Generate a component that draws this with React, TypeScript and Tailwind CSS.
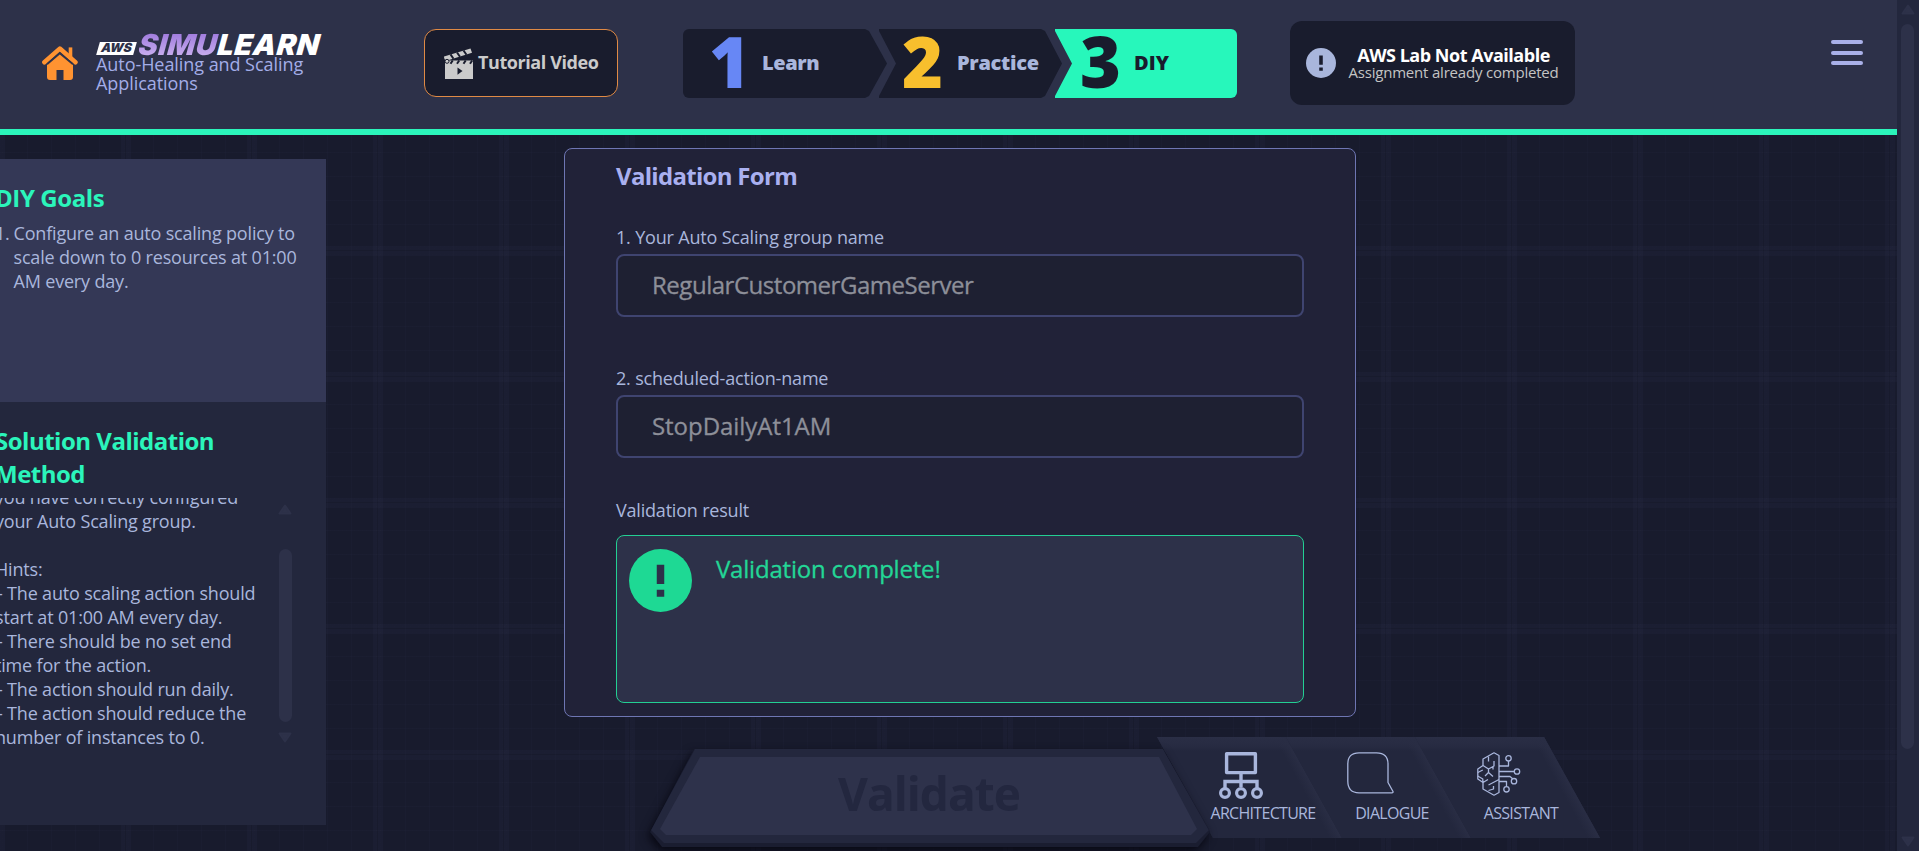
import type { ReactNode } from 'react';

const hints = [
  'you have correctly configured',
  'your Auto Scaling group.',
  '',
  'Hints:',
  '- The auto scaling action should',
  'start at 01:00 AM every day.',
  '- There should be no set end',
  'time for the action.',
  '- The action should run daily.',
  '- The action should reduce the',
  'number of instances to 0.',
];

function HomeIcon() {
  return (
    <svg width="36" height="34" viewBox="0 0 36 34" fill="none" className="shrink-0">
      <path d="M28.5 12V3.2" stroke="#ff9331" strokeWidth="3.6" strokeLinecap="square" />
      <path d="M2.4 16.2 17.8 2.6 33.4 16.2" stroke="#ff9331" strokeWidth="4.6" strokeLinecap="round" strokeLinejoin="round" />
      <path d="M5 18.2 17.8 7.6 31 18.2V31q0 3-3 3h-6.500V24h-7v10H8q-3 0-3-3Z" fill="#ff9331" />
      <path d="M5 18.2 17.8 7.4 31 18.2" stroke="#2d3149" strokeWidth="1.800" />
    </svg>
  );
}

function ClapperIcon() {
  return (
    <svg width="30" height="31" viewBox="0 0 30 31" className="shrink-0">
      <path d="M0 8.500 26.500.5 28 4.800 2.500 12.800Q0 12 0 8.500Z" fill="#cbcbcb" />
      <path d="m6.500 6.400 3 4.300M13 4.500l3 4.300M19.500 2.500l3 4.300" stroke="#191c2d" strokeWidth="2" />
      <path d="M1 12.500H29V31H1Z" fill="#cbcbcb" />
      <path d="m6.500 15.800 2.200-3.300M13 15.800l2.200-3.300M19.500 15.800l2.200-3.300M26 15.800l2.200-3.300" stroke="#191c2d" strokeWidth="2" />
      <circle cx="3" cy="13.300" r="2" fill="#cbcbcb" stroke="#191c2d" strokeWidth="1" />
      <path d="m13.500 19.500 5 3.600-5 3.600Z" fill="#191c2d" />
    </svg>
  );
}

function ArchitectureIcon() {
  return (
    <svg width="44" height="47" viewBox="0 0 44 47" fill="none" stroke="#a9b6dc">
      <path d="M7.600 1.700H36.400V20.600H7.600Z" strokeWidth="3.400" strokeLinejoin="round" />
      <path d="M22 21v14M6 36v-6.500H38V36" strokeWidth="3.400" />
      <circle cx="6" cy="41" r="4.400" strokeWidth="3.200" />
      <circle cx="22" cy="41" r="4.400" strokeWidth="3.200" />
      <circle cx="38" cy="41" r="4.400" strokeWidth="3.200" />
    </svg>
  );
}

function DialogueIcon() {
  return (
    <svg width="47" height="42" viewBox="0 0 47 42" fill="none" stroke="#a9b6dc" strokeWidth="1.300" strokeLinejoin="round">
      <path d="M12 .8H29.500Q41 .8 41 12V30.500L46 39.500Q46.300 40.800 45 40.800H12Q.8 40.800.8 29V12Q.8.800 12 .8Z" />
    </svg>
  );
}

function AssistantIcon() {
  return (
    <svg width="44" height="44" viewBox="0 0 44 44" fill="none" stroke="#a9b6dc" strokeWidth="1.300" strokeLinejoin="round">
      <path d="M22 3.500 17 .8 6 7V13.500L.8 17V27L6 30.500V37L17 43.200 22 40.500Z" />
      <path d="M11.500 4.500V9.500M17 9v5l-5.500 3-5.500-3.500M11.500 17v3.500L8 24M11.500 20.500l4.500 4M16 17.500v-3M.8 20.500l5-2.500M.8 24l5 3v3.500M22 27.500 11.500 33M6 30.500l5-3M11.500 38.500l5-1.500v-3" />
      <path d="M22 14H31.500V9M22 19.500H37M22 24.500H33L36 27M22 29.500H29.500V34.500" />
      <circle cx="31.500" cy="6.300" r="2.700" />
      <circle cx="40" cy="19.500" r="2.700" />
      <circle cx="37" cy="29.200" r="2.700" />
      <circle cx="29.500" cy="37.300" r="2.700" />
    </svg>
  );
}

function AlertBadge({ size, color, mark }: { size: number; color: string; mark: string }) {
  return (
    <svg width={size} height={size} viewBox="0 0 64 64" className="shrink-0">
      <circle cx="32" cy="32" r="32" fill={color} />
      <path d="M28.200 16H35.800V35.500H28.200ZM28.200 41.500H35.800V48.500H28.200Z" fill={mark} />
    </svg>
  );
}

function Arrow({ down, className }: { down?: boolean; className?: string }) {
  return (
    <svg width="14" height="11" viewBox="0 0 14 11" className={className}>
      <path
        d={down ? 'M1.500 1.500H12.500L7 9.500Z' : 'M1.500 9.500H12.500L7 1.500Z'}
        fill="#2d3149" stroke="#2d3149" strokeWidth="2" strokeLinejoin="round"
      />
    </svg>
  );
}

function Tab({ icon, label, first }: { icon: ReactNode; label: string; first?: boolean }) {
  return (
    <button
      className={
        'flex h-[101px] w-[185px] shrink-0 flex-col bg-[#23273d] bg-[linear-gradient(61deg,transparent_151px,#292d44_162px),linear-gradient(#2a2e45_0px,#272b42_9px,#23273d_14px)] pt-[15px] [clip-path:polygon(0_0,129px_0,100%_100%,56px_100%)] ' +
        (first ? '' : '-ml-14')
      }
    >
      <span className="flex h-[48px] w-full items-start justify-center pr-[17px]">{icon}</span>
      <span className="mt-[2px] w-full pl-[27px] text-center text-[16px] leading-[22px] tracking-[-0.7px] text-[#a9b6dc]">{label}</span>
    </button>
  );
}

function Field({ label, value, tracking }: { label: string; value: string; tracking: string }) {
  return (
    <div className="flex flex-col">
      <label className="text-lg leading-6 tracking-[-0.18px] text-[#a9b6dc]">{label}</label>
      <div className={'mt-[5px] flex h-[63px] items-center rounded-lg border-2 border-[#3f4470] bg-[#1e2032] pb-px pl-[34px] text-2xl text-[#8d8f99] [-webkit-text-stroke:0.3px] ' + tracking}>
        {value}
      </div>
    </div>
  );
}

export default function App() {
  return (
    <div className="flex h-[851px] w-[1919px] overflow-hidden bg-[#181b2d] font-['Open_Sans',sans-serif]">
      <div className="flex w-[1897px] shrink-0 flex-col">
        <header className="flex h-[135px] shrink-0 items-start border-b-[6px] border-[#2bf5bb] bg-[#2d3149]">
          <div className="mt-[46px] ml-[42px]"><HomeIcon /></div>
          <div className="mt-[33px] ml-[18px] w-[230px]">
            <div className="flex h-[22px] items-end pl-[2px]">
              <span className="flex h-[13px] w-[37px] -skew-x-[16deg] items-center justify-center bg-white font-['Inter',sans-serif] text-[12.500px] leading-none font-black text-[#2d3149]">
                AWS
              </span>
              <span className="ml-[4px] flex h-[22px] -skew-x-6 items-center font-['Inter',sans-serif] text-[29px] leading-none font-black tracking-[0.6px] italic">
                <span className="bg-linear-to-b from-[#9b74db] to-[#cdb4f0] bg-clip-text text-transparent">SIMU</span>
                <span className="text-white">LEARN</span>
              </span>
            </div>
            <div className="w-[215px] text-lg leading-[18.500px] tracking-[-0.06px] text-[#a3ade8]">Auto-Healing and Scaling Applications</div>
          </div>
          <button className="mt-[29px] ml-[98px] flex h-[68px] w-[194px] shrink-0 items-center rounded-xl border border-[#e08a45] bg-[#191c2d] pl-[19px]">
            <ClapperIcon />
            <span className="ml-[4px] pb-[2px] text-lg font-bold tracking-[-0.42px] whitespace-nowrap text-[#cbcbcb]">Tutorial Video</span>
          </button>
          <nav className="mt-[29px] ml-[65px] flex h-[69px] shrink-0 text-xl font-extrabold text-[#a9b6dc]">
            <div className="flex w-[204px] items-center rounded-l-md bg-[#191c2d] pl-[26px] [clip-path:polygon(0_0,182px_0,186px_2px,100%_50%,186px_67px,182px_100%,0_100%)]">
              <span className="w-[53px] pb-[5px] text-[70px] leading-[64px] text-[#6787f5]">1</span>
              <span className="pb-[2px] tracking-[-0.4px]">Learn</span>
            </div>
            <div className="-ml-2 flex w-[183px] items-center bg-[#191c2d] pl-[23px] [clip-path:polygon(0_0,162px_0,166px_2px,100%_50%,166px_67px,162px_100%,0_100%,0_67px,17px_50%,0_2px)]">
              <span className="w-[55px] pb-[5px] text-[70px] leading-[64px] text-[#f8bf2d]">2</span>
              <span className="pb-[2px] tracking-[-0.3px]">Practice</span>
            </div>
            <div className="-ml-[7px] flex w-[182px] items-center rounded-r-md bg-[#27f7bb] pl-[25px] text-[#191c2d] [clip-path:polygon(0_0,100%_0,100%_100%,0_100%,0_67px,17px_50%,0_2px)]">
              <span className="w-[54px] pb-[5px] text-[70px] leading-[64px]">3</span>
              <span className="pb-[2px]">DIY</span>
            </div>
          </nav>
          <div className="mt-[21px] ml-[53px] flex h-[84px] w-[285px] shrink-0 items-center rounded-xl bg-[#191c2d] pl-4">
            <AlertBadge size={30} color="#a9b6dc" mark="#191c2d" />
            <div className="ml-[11px] w-[213px] text-center whitespace-nowrap">
              <div className="text-lg leading-[18px] font-bold tracking-[-0.48px] text-white">AWS Lab Not Available</div>
              <div className="text-[15px] leading-[17px] tracking-[-0.2px] text-[#c4c4c4]">Assignment already completed</div>
            </div>
          </div>
          <button className="mt-[40px] ml-[256px] flex w-8 flex-col gap-[6.500px]">
            <span className="h-1 w-full rounded-full bg-[#a9b0e8]" />
            <span className="h-1 w-full rounded-full bg-[#a9b0e8]" />
            <span className="h-1 w-full rounded-full bg-[#a9b0e8]" />
          </button>
        </header>

        <main className="flex min-h-0 flex-1 items-start bg-[linear-gradient(90deg,rgb(130_130_200/0.03)_0px_4.500px,transparent_4.500px_5.500px,rgb(130_130_200/0.03)_5.500px_10px,transparent_10px),linear-gradient(rgb(130_130_200/0.03)_0px_4.500px,transparent_4.500px_5.500px,rgb(130_130_200/0.03)_5.500px_10px,transparent_10px),linear-gradient(90deg,transparent_32px,rgb(130_130_200/0.025)_32px_33px,transparent_33px_56px,rgb(130_130_200/0.025)_56px_57px,transparent_57px_80px,rgb(130_130_200/0.025)_80px_81px,transparent_81px_104px,rgb(130_130_200/0.025)_104px_105px,transparent_105px),linear-gradient(transparent_32px,rgb(130_130_200/0.025)_32px_33px,transparent_33px_56px,rgb(130_130_200/0.025)_56px_57px,transparent_57px_80px,rgb(130_130_200/0.025)_80px_81px,transparent_81px_104px,rgb(130_130_200/0.025)_104px_105px,transparent_105px)] bg-size-[126px_126px] bg-position-[-5px_111px]">
          <aside className="mt-6 -ml-[5px] flex w-[331px] shrink-0 flex-col text-lg leading-6 tracking-[-0.18px] text-[#a9b6dc]">
            <section className="h-[243px] bg-[#343856] pt-[22px]">
              <h2 className="text-2xl leading-[33px] font-bold tracking-[-0.4px] text-[#2bf5bb]">DIY Goals</h2>
              <div className="mt-[7px] flex">
                <span className="w-[18.500px] shrink-0">1.</span>
                <p className="w-[295px]">Configure an auto scaling policy to scale down to 0 resources at 01:00 AM every day.</p>
              </div>
            </section>
            <section className="h-[423px] bg-[#23273d] pt-[22px]">
              <h2 className="w-[260px] text-2xl leading-[33px] font-bold tracking-[-0.5px] text-[#2bf5bb]">Solution Validation Method</h2>
              <div className="mt-[8px] flex h-[254px] overflow-hidden">
                <div className="-mt-[13px] w-[283px] shrink-0 whitespace-nowrap">
                  {hints.map((line, i) => (
                    <p key={i} className={line.startsWith('-') ? 'h-6 pl-[2px]' : 'h-6'}>{line}</p>
                  ))}
                </div>
                <div className="flex w-[14px] flex-col items-center pt-[6px]">
                  <Arrow />
                  <div className="mt-[34px] h-[173px] w-[13px] shrink-0 rounded-full bg-[#2d3149]" />
                  <Arrow down className="mt-[10px]" />
                </div>
              </div>
            </section>
          </aside>

          <div className="mt-[13px] ml-[238px] flex shrink-0 flex-col">
            <section className="flex h-[569px] w-[792px] flex-col rounded-lg border border-[#6e76b3] bg-[#222339]/95 px-[51px] pt-[10px]">
              <h1 className="text-2xl leading-[33px] font-bold tracking-[-0.7px] text-[#a9b0f0]">Validation Form</h1>
              <div className="mt-[33px] flex flex-col gap-[49px]">
                <Field label="1. Your Auto Scaling group name" value="RegularCustomerGameServer" tracking="tracking-[-0.47px]" />
                <Field label="2. scheduled-action-name" value="StopDailyAt1AM" tracking="tracking-[-0.05px]" />
              </div>
              <p className="mt-[40px] text-lg leading-6 tracking-[-0.2px] text-[#a9b6dc]">Validation result</p>
              <div className="mt-[13px] flex h-[168px] items-start rounded-lg border border-[#23cf93] bg-[#2d3149] pt-[13px] pl-[12px]">
                <AlertBadge size={63} color="#1ed994" mark="#2d3149" />
                <span className="mt-[3px] ml-[24px] text-2xl leading-[33px] tracking-[-0.2px] text-[#23d696] [-webkit-text-stroke:0.3px]">Validation complete!</span>
              </div>
            </section>

            <div className="mt-5 ml-[86px] flex items-start">
              <div className="relative z-10 mt-3 drop-shadow-[-2px_4px_5px_rgba(5,6,16,0.9)]">
                <div className="h-[98px] w-[560px] bg-[#1a1d30] [clip-path:polygon(44px_0,513px_0,560px_83px,548px_98px,12px_98px,0_83px)]">
                  <div className="h-[94px] w-[560px] bg-[#23273d] pt-2 [clip-path:polygon(45px_0,513px_0,559px_81px,546px_94px,14px_94px,1px_81px)]">
                    <button className="flex h-[78px] w-[560px] items-center justify-center bg-[#2e324b] pr-[2px] pb-[6px] text-[46px] font-bold tracking-[-1px] text-[#23273f] [clip-path:polygon(50px_0,509px_0,547px_72px,541px_100%,16px_100%,10px_72px)]">
                      Validate
                    </button>
                  </div>
                </div>
              </div>
              <div className="-ml-[53px] flex">
                <Tab first icon={<ArchitectureIcon />} label="ARCHITECTURE" />
                <Tab icon={<DialogueIcon />} label="DIALOGUE" />
                <Tab icon={<AssistantIcon />} label="ASSISTANT" />
              </div>
            </div>
          </div>
        </main>
      </div>

      <div className="flex w-[22px] shrink-0 flex-col items-center bg-[#23273d] pt-1 pb-1 pr-[1px]">
        <Arrow />
        <div className="mt-[9px] h-[725px] w-[13px] rounded-full bg-[#2d3149]" />
        <Arrow down className="mt-auto" />
      </div>
    </div>
  );
}
